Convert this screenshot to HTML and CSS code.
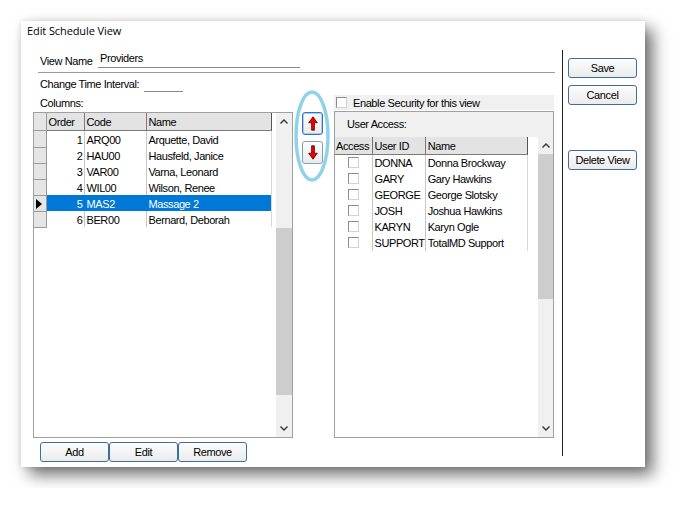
FILE: index.html
```html
<!DOCTYPE html>
<html lang="en">
<head>
  <meta charset="UTF-8">
  <title>Edit Schedule View</title>
  <link rel="stylesheet" href="styles.css">
</head>
<body>
<div class="dialog">
  <div class="title">Edit Schedule View</div>
  <div class="body">
    <div class="main">
      <div class="name-row">
        <span class="lbl">View Name</span>
        <span class="field name-field">Providers</span>
      </div>
      <div class="rule"></div>
      <div class="interval-row">
        <span class="lbl">Change Time Interval:</span>
        <span class="field interval-field"></span>
      </div>

      <div class="panels">
        <div class="left">
          <div class="lbl cols-lbl">Columns:</div>
          <div class="grid left-grid">
            <table class="rows">
              <colgroup>
                <col class="c-ind"><col class="c-order"><col class="c-code"><col class="c-name">
              </colgroup>
              <tr class="head"><th class="ind"></th><th>Order</th><th>Code</th><th>Name</th></tr>
              <tr><td class="ind"></td><td class="num">1</td><td>ARQ00</td><td>Arquette, David</td></tr>
              <tr><td class="ind"></td><td class="num">2</td><td>HAU00</td><td>Hausfeld, Janice</td></tr>
              <tr><td class="ind"></td><td class="num">3</td><td>VAR00</td><td>Varna, Leonard</td></tr>
              <tr><td class="ind"></td><td class="num">4</td><td>WIL00</td><td>Wilson, Renee</td></tr>
              <tr class="sel"><td class="ind"><span class="pointer"></span></td><td class="num">5</td><td>MAS2</td><td>Massage 2</td></tr>
              <tr><td class="ind"></td><td class="num">6</td><td>BER00</td><td>Bernard, Deborah</td></tr>
            </table>
            <div class="vscroll">
              <div class="arrow"><svg width="8" height="5" viewBox="0 0 8 5"><path d="M0.5 4.5 L4 1 L7.5 4.5" fill="none" stroke="#333" stroke-width="1.4"/></svg></div>
              <div class="track" style="height:98px"></div>
              <div class="thumb" style="height:167px"></div>
              <div class="track fill"></div>
              <div class="arrow"><svg width="8" height="5" viewBox="0 0 8 5"><path d="M0.5 0.5 L4 4 L7.5 0.5" fill="none" stroke="#333" stroke-width="1.4"/></svg></div>
            </div>
          </div>
          <div class="btn-row">
            <button class="btn">Add</button>
            <button class="btn">Edit</button>
            <button class="btn">Remove</button>
          </div>
        </div>

        <div class="movers">
          <button class="btn mover focus">
            <svg width="10" height="15" viewBox="0 0 10 15"><path d="M5 0.8 L9.3 6.8 L6.4 6.8 L6.4 14.2 L3.6 14.2 L3.6 6.8 L0.7 6.8 Z" fill="#f00000" stroke="#5a0000" stroke-width="0.8"/></svg>
          </button>
          <button class="btn mover">
            <svg width="10" height="15" viewBox="0 0 10 15"><path d="M5 14.2 L9.3 8.2 L6.4 8.2 L6.4 0.8 L3.6 0.8 L3.6 8.2 L0.7 8.2 Z" fill="#f00000" stroke="#5a0000" stroke-width="0.8"/></svg>
          </button>
          <svg class="ring" width="40" height="96" viewBox="0 0 40 96"><ellipse cx="20" cy="48" rx="16" ry="44" fill="none" stroke="#8fd3ea" stroke-width="3.5"/></svg>
        </div>

        <div class="right">
          <div class="security"><span class="check"></span>Enable Security for this view</div>
          <div class="grid right-grid">
            <div class="caption">User Access:</div>
            <div class="grid-body">
              <table class="rows">
                <colgroup>
                  <col class="c-acc"><col class="c-uid"><col class="c-uname">
                </colgroup>
                <tr class="head"><th>Access</th><th>User ID</th><th>Name</th></tr>
                <tr><td class="box"><span class="check"></span></td><td>DONNA</td><td>Donna Brockway</td></tr>
                <tr><td class="box"><span class="check"></span></td><td>GARY</td><td>Gary Hawkins</td></tr>
                <tr><td class="box"><span class="check"></span></td><td>GEORGE</td><td>George Slotsky</td></tr>
                <tr><td class="box"><span class="check"></span></td><td>JOSH</td><td>Joshua Hawkins</td></tr>
                <tr><td class="box"><span class="check"></span></td><td>KARYN</td><td>Karyn Ogle</td></tr>
                <tr><td class="box"><span class="check"></span></td><td>SUPPORT</td><td>TotalMD Support</td></tr>
              </table>
              <div class="vscroll">
                <div class="arrow"><svg width="8" height="5" viewBox="0 0 8 5"><path d="M0.5 4.5 L4 1 L7.5 4.5" fill="none" stroke="#333" stroke-width="1.4"/></svg></div>
                <div class="thumb" style="height:145px"></div>
                <div class="track fill"></div>
                <div class="arrow"><svg width="8" height="5" viewBox="0 0 8 5"><path d="M0.5 0.5 L4 4 L7.5 0.5" fill="none" stroke="#333" stroke-width="1.4"/></svg></div>
              </div>
            </div>
          </div>
        </div>
      </div>
    </div>

    <div class="divider"></div>

    <div class="side">
      <button class="btn side-btn">Save</button>
      <button class="btn side-btn">Cancel</button>
      <button class="btn side-btn delete">Delete View</button>
    </div>
  </div>
</div>
</body>
</html>
```

FILE: styles.css
```css
body {
  margin: 0;
  padding: 21px;
  background: #fff;
  font-family: "Liberation Sans", Arial, sans-serif;
  font-size: 11px;
  letter-spacing: -0.4px;
  color: #000;
}
.dialog {
  width: 624px;
  height: 446px;
  background: #fff;
  box-shadow: 0 0 6px rgba(0, 0, 0, 0.12), 8px 8px 15px rgba(0, 0, 0, 0.55);
  display: flex;
  flex-direction: column;
}
.title {
  font-family: "Open Sans", "Noto Sans", sans-serif;
  font-size: 11px;
  letter-spacing: -0.1px;
  padding: 2px 0 0 6px;
  height: 29px;
  box-sizing: border-box;
}
.body {
  display: flex;
  height: 406px;
  padding-left: 12px;
}
.main {
  width: 522px;
  display: flex;
  flex-direction: column;
}
.lbl {
  white-space: nowrap;
}
.name-row {
  display: flex;
  align-items: flex-end;
  height: 18px;
  margin-top: 2px;
  padding-left: 7px;
}
.name-row .lbl {
  width: 58px;
  padding-bottom: 1px;
}
.field {
  display: inline-block;
  border-bottom: 1px solid #8a8a8a;
}
.name-field {
  width: 200px;
  padding: 0 0 2px 2px;
  line-height: 13px;
}
.rule {
  margin: 4px 0 0 5px;
  height: 1px;
  background: #3a3a3a;
  border-bottom: 1px solid #9a9a9a;
}
.interval-row {
  display: flex;
  align-items: flex-end;
  height: 18px;
  padding-left: 7px;
  margin-top: 4px;
}
.interval-row .lbl {
  width: 104px;
  padding-bottom: 2px;
}
.interval-field {
  width: 39px;
  height: 14px;
}
.panels {
  display: flex;
  margin-top: 3px;
}
.left {
  width: 260px;
  display: flex;
  flex-direction: column;
}
.cols-lbl {
  padding: 2px 0 0 7px;
  height: 17px;
  box-sizing: border-box;
}
.grid {
  border: 1px solid #a0a0a0;
  background: #fff;
  box-sizing: border-box;
}
.left-grid {
  height: 326px;
  display: flex;
  justify-content: space-between;
}
.rows {
  border-collapse: collapse;
  table-layout: fixed;
  align-self: flex-start;
}
.rows th,
.rows td {
  padding: 0 0 0 2px;
  height: 16px;
  line-height: 16px;
  white-space: nowrap;
  overflow: hidden;
  text-align: left;
  font-weight: normal;
  border-left: 1px solid #c8c8c8;
}
.rows .head th {
  height: 16px;
  background: #e3e3e3;
  border-left: 1px solid #7a7a7a;
  border-bottom: 1px solid #7a7a7a;
}
.rows .head th:last-child {
  border-right: 1px solid #555;
}
.rows tr:not(.head) td:last-child {
  border-right: 1px solid #d8d8d8;
}
.c-ind { width: 12px; }
.c-order { width: 38px; }
.c-code { width: 62px; }
.c-name { width: 125px; }
.left-grid .rows .head th {
  height: 17px;
}
.left-grid .rows td {
  height: 13px;
  padding-top: 2px;
  line-height: 14px;
}
.rows td.num {
  text-align: right;
  padding-right: 1px;
  padding-left: 0;
}
.rows td.ind,
.rows th.ind {
  background: #e5e5e5;
  border-left: none;
  border-bottom: 1px solid #9a9a9a;
  border-right: 1px solid #9a9a9a;
  padding-left: 0;
}
.pointer {
  display: block;
  width: 0;
  height: 0;
  margin-left: 2px;
  border-top: 5px solid transparent;
  border-bottom: 5px solid transparent;
  border-left: 6px solid #000;
}
.rows tr.sel td:not(.ind) {
  background: #0078d7;
  color: #fff;
  border-left-color: #0078d7;
}
.vscroll {
  width: 16px;
  background: #f0f0f0;
  display: flex;
  flex-direction: column;
}
.vscroll .arrow {
  height: 17px;
  display: flex;
  align-items: center;
  justify-content: center;
  flex: none;
}
.vscroll .thumb {
  background: #cdcdcd;
  flex: none;
}
.vscroll .track {
  flex: none;
}
.vscroll .track.fill {
  flex: 1;
}
.btn-row {
  display: flex;
  padding: 4px 0 0 7px;
}
.btn {
  font-family: "Liberation Sans", Arial, sans-serif;
  font-size: 11px;
  letter-spacing: -0.4px;
  color: #000;
  height: 20px;
  padding: 0;
  border: 1px solid #3d6f9e;
  border-radius: 3px;
  background: linear-gradient(#fdfdfd, #ebebeb);
}
.btn-row .btn {
  width: 69px;
}
.movers {
  position: relative;
  width: 21px;
  margin: 17px 11px 0 9px;
  display: flex;
  flex-direction: column;
  gap: 6px;
}
.mover {
  width: 21px;
  height: 23px;
  display: flex;
  align-items: center;
  justify-content: center;
  border-color: #7e9ec0;
}
.mover.focus {
  border-color: #3a72b8;
  box-shadow: inset 0 0 0 1px #a9cdf2;
}
.ring {
  position: absolute;
  left: -10px;
  top: -24px;
}
.right {
  width: 220px;
  display: flex;
  flex-direction: column;
}
.security {
  display: flex;
  align-items: center;
  gap: 6px;
  height: 15px;
  padding-left: 2px;
  background: #f0f0f0;
}
.check {
  display: inline-block;
  width: 9px;
  height: 9px;
  background: #fff;
  border-top: 1px solid #8c8c8c;
  border-left: 1px solid #8c8c8c;
  border-bottom: 1px solid #d2d2d2;
  border-right: 1px solid #d2d2d2;
}
.right-grid {
  margin-top: 1px;
  height: 327px;
  display: flex;
  flex-direction: column;
}
.caption {
  height: 25px;
  line-height: 25px;
  padding-left: 12px;
  background: #f0f0f0;
  flex: none;
}
.grid-body {
  flex: 1;
  display: flex;
  justify-content: space-between;
}
.right-grid .rows .head th {
  height: 17px;
}
.c-acc { width: 37px; }
.c-uid { width: 51px; }
.c-uname { width: 102px; }
.right-grid .rows th:first-child,
.right-grid .rows td:first-child {
  border-left: none;
  padding-left: 1px;
}
.rows td.box {
  text-align: center;
  padding: 0;
}
.rows td.box .check {
  vertical-align: -1px;
}
.right-grid .vscroll {
  width: 15px;
}
.divider {
  width: 1px;
  height: 406px;
  background: #222;
  margin-left: 7px;
}
.side {
  display: flex;
  flex-direction: column;
  padding: 8px 0 0 5px;
}
.side-btn {
  width: 69px;
  height: 20px;
  margin-bottom: 7px;
}
.side-btn.delete {
  margin-top: 38px;
}
```
